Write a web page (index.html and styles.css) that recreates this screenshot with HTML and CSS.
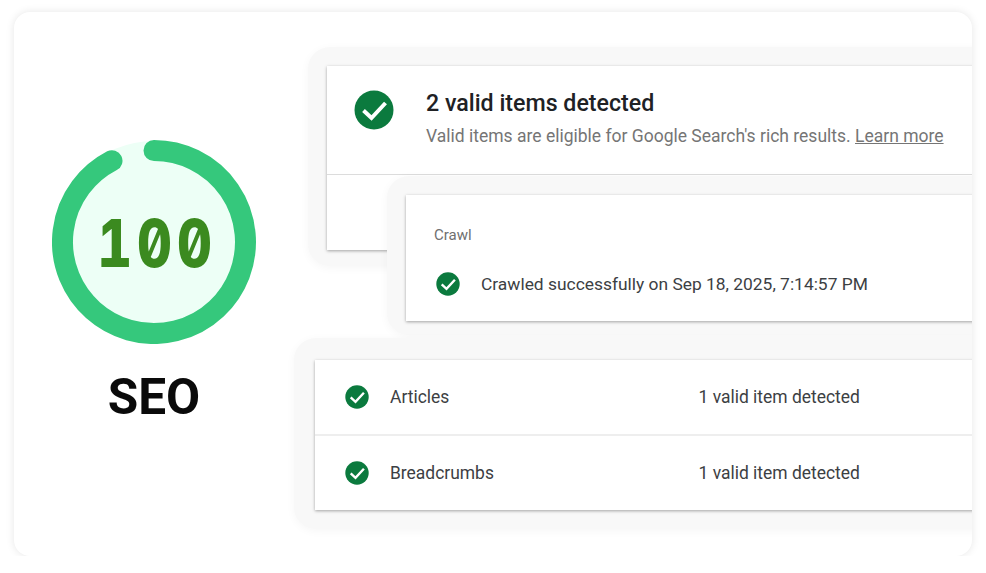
FILE: index.html
```html
<!DOCTYPE html>
<html lang="en">
  <head>
    <title>SEO score</title>
    <meta charset="UTF-8" />
    <meta name="viewport" content="width=device-width, initial-scale=1.0" />
    <link rel="stylesheet" href="styles.css">
  </head>

  <body>
    <svg class="defs" width="0" height="0">
      <symbol id="check" viewBox="0 0 40 40">
        <circle cx="20" cy="20" r="19.5" fill="#0b7a3e" />
        <path d="M9.5 20.5l8 7.5 14-15" fill="none" stroke="#fff" stroke-width="4" />
      </symbol>
    </svg>

    <div class="card">
      <div class="score">
        <svg class="gauge" width="204" height="204" viewBox="0 0 204 204">
          <circle cx="102" cy="102" r="101" fill="#edfff6" />
          <path d="M102 10.5A91.5 91.5 0 1 1 60 20.7" fill="none" stroke="#35c87c" stroke-width="21" stroke-linecap="round" />
          <text class="gauge-num" transform="translate(105 127) scale(0.82 1)" text-anchor="middle">100</text>
        </svg>
        <div class="score-label">SEO</div>
      </div>

      <div class="panels">
        <div class="panel panel-valid">
          <div class="sheet sheet-valid">
            <div class="valid-head">
              <svg class="icon-big"><use href="#check" /></svg>
              <div>
                <div class="valid-title">2 valid items detected</div>
                <div class="valid-sub">Valid items are eligible for Google Search's rich results. <a class="learn" href="#">Learn more</a></div>
              </div>
            </div>
          </div>
        </div>

        <div class="panel panel-crawl">
          <div class="sheet sheet-crawl">
            <div class="crawl-label">Crawl</div>
            <div class="crawl-row">
              <svg class="icon"><use href="#check" /></svg>
              <span>Crawled successfully on Sep 18, 2025, 7:14:57 PM</span>
            </div>
          </div>
        </div>

        <div class="panel panel-items">
          <div class="sheet">
            <div class="item">
              <svg class="icon"><use href="#check" /></svg>
              <span class="item-name">Articles</span>
              <span>1 valid item detected</span>
            </div>
            <div class="item">
              <svg class="icon"><use href="#check" /></svg>
              <span class="item-name">Breadcrumbs</span>
              <span>1 valid item detected</span>
            </div>
          </div>
        </div>
      </div>
    </div>
  </body>
</html>
```

FILE: styles.css
```css
html {
  overflow: hidden;
}

body {
  font-family: Roboto, "Liberation Sans", sans-serif;
  background-color: #fff;
  color: #3c4043;
  margin: 0;
}

.defs {
  display: block;
}

.card {
  display: flex;
  width: 958px;
  height: 544px;
  margin: 12px 0 0 14px;
  background-color: #fff;
  border-radius: 16px;
  box-shadow: 0 0 8px rgba(0, 0, 0, 0.1);
  overflow: hidden;
}

.score {
  flex: none;
  width: 280px;
  display: flex;
  flex-direction: column;
  align-items: center;
  padding-top: 128px;
  box-sizing: border-box;
}

.gauge {
  display: block;
}

.gauge-num {
  font-family: Inter, monospace;
  font-size: 66px;
  font-weight: 800;
  font-feature-settings: "zero", "tnum";
  letter-spacing: 6px;
  fill: #3b8a1f;
}

.score-label {
  font-size: 49.5px;
  font-weight: 700;
  line-height: 58px;
  margin-top: 24px;
  color: #0a0a0a;
}

.panels {
  flex: none;
  width: 760px;
  padding-top: 35px;
}

.panel {
  background-color: #f8f8f8;
  border-radius: 22px;
  box-shadow: 0 2px 10px rgba(0, 0, 0, 0.04);
  box-sizing: border-box;
  position: relative;
}

.sheet {
  background-color: #fff;
  box-shadow: 0 1px 3px rgba(0, 0, 0, 0.35);
}

.panel-valid {
  margin-left: 14px;
  padding: 19px;
  height: 219px;
}

.sheet-valid {
  height: 184px;
}

.valid-head {
  display: flex;
  align-items: flex-start;
  gap: 32px;
  height: 109px;
  padding: 23px 0 0 27px;
  box-sizing: border-box;
  border-bottom: 1px solid #dcdcdc;
}

.icon-big {
  width: 40px;
  height: 40px;
  flex: none;
  margin-top: 1px;
}

.valid-title {
  font-size: 23.2px;
  font-weight: 500;
  line-height: 28px;
  color: #202124;
}

.valid-sub {
  font-size: 17.5px;
  line-height: 24px;
  margin-top: 7px;
  color: #757575;
}

.learn {
  color: #757575;
}

.panel-crawl {
  margin: -90px 0 0 93px;
  padding: 19px;
  height: 159px;
}

.sheet-crawl {
  height: 126px;
  padding: 31px 0 0 28px;
  box-sizing: border-box;
}

.crawl-label {
  font-size: 15px;
  line-height: 18px;
  color: #6f6f6f;
}

.crawl-row {
  display: flex;
  align-items: center;
  gap: 21px;
  margin: 28px 0 0 2px;
  font-size: 17.4px;
  line-height: 24px;
}

.icon {
  width: 24px;
  height: 24px;
  flex: none;
}

.panel-items {
  margin: 3px 0 0 0;
  padding: 22px 19px 19px 21px;
  height: 191px;
}

.item {
  display: flex;
  align-items: center;
  height: 74px;
  padding-left: 30px;
  box-sizing: border-box;
  font-size: 17.45px;
}

.item + .item {
  height: 76px;
  border-top: 2px solid #eeeeee;
}

.item-name {
  width: 308.5px;
  margin-left: 21px;
}
```
